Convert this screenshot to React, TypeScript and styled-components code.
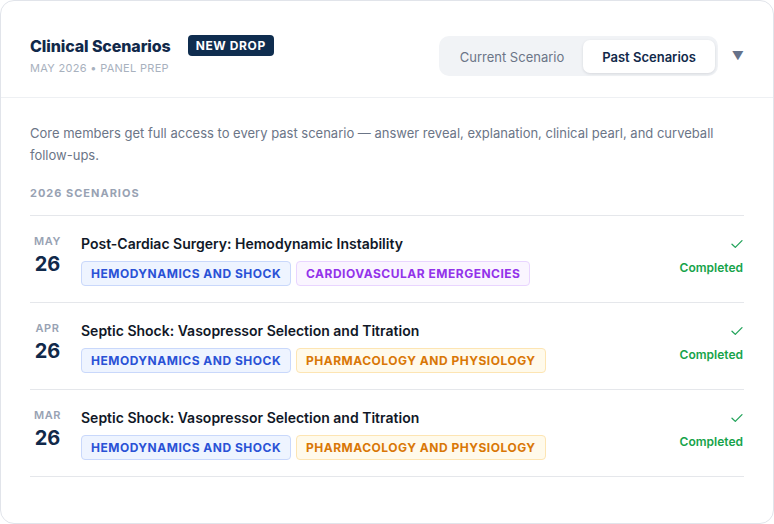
import styled, { createGlobalStyle } from "styled-components";
import { useState } from "react";

const GlobalStyle = createGlobalStyle`
  html, body {
    margin: 0;
    padding: 0;
    background: #ffffff;
  }
  body {
    font-family: Inter, "Noto Sans", "Liberation Sans", sans-serif;
    -webkit-font-smoothing: antialiased;
  }
`;

const Card = styled.div`
  box-sizing: border-box;
  width: 774px;
  height: 524px;
  border: 1px solid #e1e4ea;
  border-radius: 14px;
  background: #fff;
  overflow: hidden;
`;

const Header = styled.div`
  display: flex;
  justify-content: space-between;
  align-items: flex-start;
  padding: 34px 29px 21px 29px;
  border-bottom: 1px solid #eef0f3;
`;

const TitleBlock = styled.div`
  display: flex;
  flex-direction: column;
  gap: 5px;
`;

const TitleRow = styled.div`
  display: flex;
  align-items: center;
  gap: 17px;
  height: 21px;
`;

const Title = styled.h1`
  margin: 0;
  font-size: 16px;
  font-weight: 800;
  color: #11294a;
  letter-spacing: -0.1px;
`;

const Badge = styled.span`
  display: inline-flex;
  align-items: center;
  height: 21px;
  padding: 0 8px;
  border-radius: 4px;
  background: #0f2d4f;
  color: #fff;
  font-size: 12px;
  font-weight: 700;
  letter-spacing: 0.6px;
`;

const Subtitle = styled.div`
  font-size: 11px;
  color: #a8b1be;
  letter-spacing: 0.3px;
  line-height: 14px;
`;

const HeaderRight = styled.div`
  display: flex;
  align-items: center;
  gap: 14px;
  padding-top: 1px;
`;

const Toggle = styled.div`
  display: flex;
  padding: 4px 3px 3px 4px;
  background: #f1f3f6;
  border-radius: 10px;
`;

const ToggleButton = styled.button<{ $active: boolean }>`
  border: 0;
  height: 33px;
  padding: ${(p) => (p.$active ? "0 19px" : "0 19px 0 17px")};
  border-radius: 7px;
  font-family: inherit;
  font-size: 13px;
  cursor: pointer;
  font-weight: ${(p) => (p.$active ? 600 : 400)};
  color: ${(p) => (p.$active ? "#11294a" : "#6b7587")};
  background: ${(p) => (p.$active ? "#fff" : "transparent")};
  box-shadow: ${(p) =>
    p.$active ? "0 1px 3px rgba(15, 23, 42, 0.12)" : "none"};
`;

const Caret = styled.span`
  font-size: 12px;
  color: #66728a;
  line-height: 1;
`;

const Body = styled.div`
  padding: 0 29px;
`;

const Description = styled.p`
  margin: 24px 0 0 0;
  font-size: 13px;
  line-height: 22px;
  color: #6b7587;
`;

const SectionLabel = styled.div`
  margin-top: 20px;
  padding-bottom: 15px;
  border-bottom: 1px solid #e5e7eb;
  font-size: 11px;
  font-weight: 700;
  letter-spacing: 1px;
  color: #98a2b3;
  line-height: 14px;
`;

const Row = styled.div`
  display: flex;
  align-items: flex-start;
  padding: 17px 0 16px 0;
  border-bottom: 1px solid #e5e7eb;
`;

const DateCol = styled.div`
  width: 35px;
  margin-right: 16px;
  padding-top: 1px;
  display: flex;
  flex-direction: column;
  align-items: center;
`;

const Month = styled.div`
  font-size: 11px;
  font-weight: 600;
  color: #98a2b3;
  letter-spacing: 0.6px;
  line-height: 14px;
`;

const Day = styled.div`
  font-size: 20px;
  font-weight: 700;
  color: #11294a;
  line-height: 24px;
  margin-top: 4px;
`;

const Main = styled.div`
  flex: 1;
  display: flex;
  flex-direction: column;
  gap: 7px;
  padding-top: 1px;
`;

const RowTitle = styled.div`
  font-size: 14px;
  font-weight: 600;
  color: #111827;
  line-height: 20px;
`;

const Tags = styled.div`
  display: flex;
  gap: 5px;
`;

const tagColors = {
  blue: { bg: "#eef4ff", border: "#c9d8fb", fg: "#2a52d6" },
  purple: { bg: "#faf5ff", border: "#e9d5ff", fg: "#9333ea" },
  orange: { bg: "#fffaeb", border: "#fde5b3", fg: "#d97706" },
};

type TagColor = keyof typeof tagColors;

const Tag = styled.span<{ $color: TagColor }>`
  box-sizing: border-box;
  display: inline-flex;
  align-items: center;
  height: 25px;
  padding: 0 9px;
  border-radius: 4px;
  font-size: 12px;
  font-weight: 700;
  letter-spacing: 0.5px;
  background: ${(p) => tagColors[p.$color].bg};
  border: 1px solid ${(p) => tagColors[p.$color].border};
  color: ${(p) => tagColors[p.$color].fg};
`;

const Status = styled.div`
  display: flex;
  flex-direction: column;
  align-items: flex-end;
  gap: 11px;
  padding-top: 6px;
  padding-right: 1px;
`;

const StatusText = styled.span`
  font-size: 12px;
  font-weight: 600;
  color: #16a34a;
  line-height: 16px;
`;

const Check = () => (
  <svg width="12" height="10" viewBox="0 0 12 10" fill="none">
    <path
      d="M1 5.2 L4.3 8.4 L11 1.6"
      stroke="#22a35a"
      strokeWidth="1.3"
      strokeLinecap="round"
      strokeLinejoin="round"
    />
  </svg>
);

const scenarios: {
  month: string;
  day: string;
  title: string;
  tags: { label: string; color: TagColor }[];
}[] = [
  {
    month: "MAY",
    day: "26",
    title: "Post-Cardiac Surgery: Hemodynamic Instability",
    tags: [
      { label: "HEMODYNAMICS AND SHOCK", color: "blue" },
      { label: "CARDIOVASCULAR EMERGENCIES", color: "purple" },
    ],
  },
  {
    month: "APR",
    day: "26",
    title: "Septic Shock: Vasopressor Selection and Titration",
    tags: [
      { label: "HEMODYNAMICS AND SHOCK", color: "blue" },
      { label: "PHARMACOLOGY AND PHYSIOLOGY", color: "orange" },
    ],
  },
  {
    month: "MAR",
    day: "26",
    title: "Septic Shock: Vasopressor Selection and Titration",
    tags: [
      { label: "HEMODYNAMICS AND SHOCK", color: "blue" },
      { label: "PHARMACOLOGY AND PHYSIOLOGY", color: "orange" },
    ],
  },
];

export default function App() {
  const [tab, setTab] = useState<"current" | "past">("past");

  return (
    <>
      <GlobalStyle />
      <Card>
        <Header>
          <TitleBlock>
            <TitleRow>
              <Title>Clinical Scenarios</Title>
              <Badge>NEW DROP</Badge>
            </TitleRow>
            <Subtitle>MAY 2026 • PANEL PREP</Subtitle>
          </TitleBlock>
          <HeaderRight>
            <Toggle>
              <ToggleButton
                $active={tab === "current"}
                onClick={() => setTab("current")}
              >
                Current Scenario
              </ToggleButton>
              <ToggleButton
                $active={tab === "past"}
                onClick={() => setTab("past")}
              >
                Past Scenarios
              </ToggleButton>
            </Toggle>
            <Caret>▼</Caret>
          </HeaderRight>
        </Header>
        <Body>
          <Description>
            Core members get full access to every past scenario — answer
            reveal, explanation, clinical pearl, and curveball follow-ups.
          </Description>
          <SectionLabel>2026 SCENARIOS</SectionLabel>
          {scenarios.map((s, i) => (
            <Row key={s.month + i}>
              <DateCol>
                <Month>{s.month}</Month>
                <Day>{s.day}</Day>
              </DateCol>
              <Main>
                <RowTitle>{s.title}</RowTitle>
                <Tags>
                  {s.tags.map((t) => (
                    <Tag key={t.label} $color={t.color}>
                      {t.label}
                    </Tag>
                  ))}
                </Tags>
              </Main>
              <Status>
                <Check />
                <StatusText>Completed</StatusText>
              </Status>
            </Row>
          ))}
        </Body>
      </Card>
    </>
  );
}
